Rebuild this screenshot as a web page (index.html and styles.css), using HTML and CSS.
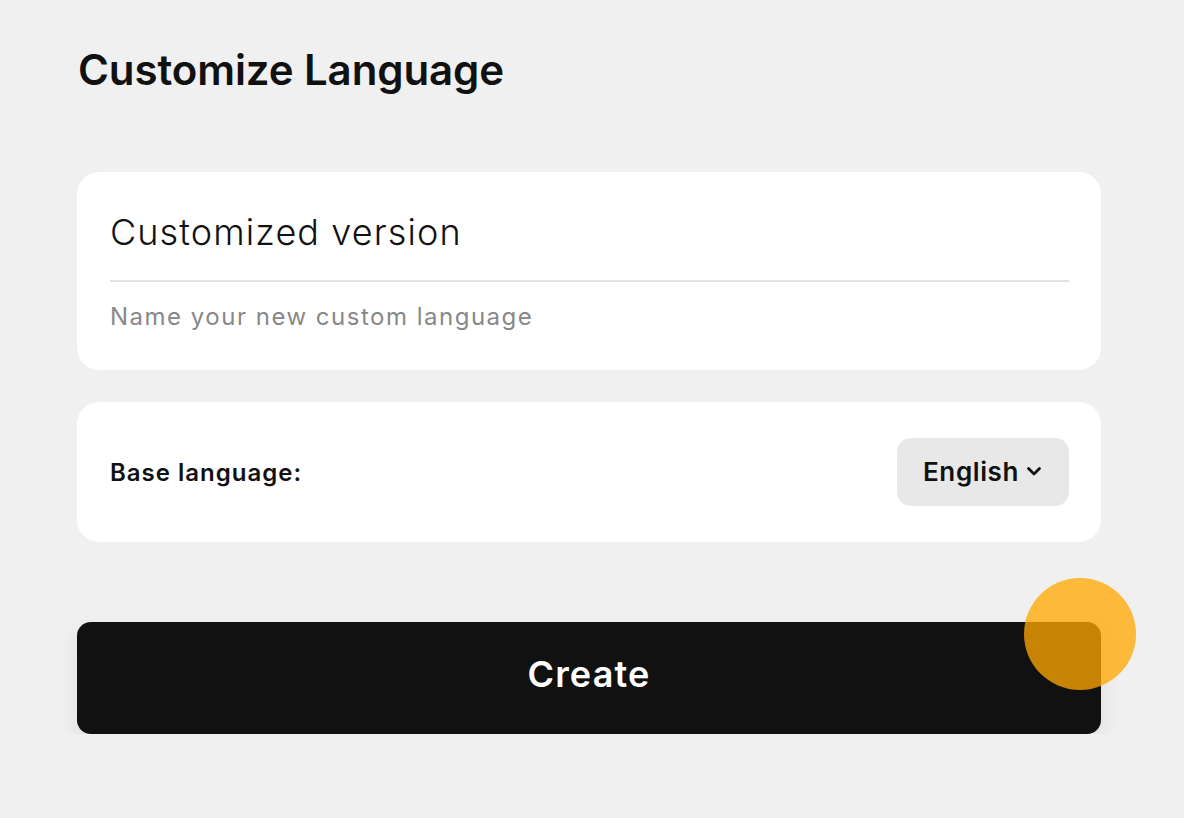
FILE: index.html
```html
<!DOCTYPE html>
<html lang="en">
<head>
    <meta charset="UTF-8">
    <meta name="viewport" content="width=device-width, initial-scale=1.0">
    <title>Customize Language</title>
    <link rel="stylesheet" href="styles.css">
</head>
<body>
    <div class="page">
        <h1 class="title">Customize Language</h1>

        <div class="card name-card">
            <div class="name-value">Customized version</div>
            <div class="divider"></div>
            <div class="name-hint">Name your new custom language</div>
        </div>

        <div class="card base-card">
            <span class="base-label">Base language:</span>
            <button class="select">
                English
                <svg width="18" height="18" viewBox="0 0 18 18" fill="none">
                    <path d="M3.5 6.5l5.5 5.5 5.5-5.5" stroke="#111" stroke-width="2.8" stroke-linecap="round" stroke-linejoin="round"/>
                </svg>
            </button>
        </div>

        <div class="create-wrap">
            <button class="create">Create</button>
            <div class="touch"></div>
        </div>
    </div>
</body>
</html>
```

FILE: styles.css
```css
body {
    margin: 0;
    background-color: #f0f0f0;
    font-family: Inter, "Noto Sans", sans-serif;
    color: #111;
}
.page {
    width: 1024px;
    padding: 44px 0 0 77px;
    display: flex;
    flex-direction: column;
}
.title {
    margin: 0 0 0 1px;
    font-size: 42px;
    font-weight: 600;
    line-height: 52px;
    letter-spacing: -0.1px;
}
.card {
    background: white;
    border-radius: 22px;
}
.name-card {
    margin-top: 76px;
    height: 198px;
    box-sizing: border-box;
    padding: 36px 32px 0 33px;
}
.name-value {
    font-size: 36px;
    font-weight: 300;
    line-height: 48px;
    letter-spacing: 1.1px;
}
.divider {
    height: 2px;
    background: #e2e2e2;
    margin-top: 24px;
}
.name-hint {
    margin-top: 16px;
    font-size: 24px;
    line-height: 38px;
    letter-spacing: 1.5px;
    color: #888;
}
.base-card {
    margin-top: 32px;
    height: 140px;
    box-sizing: border-box;
    padding: 0 32px 0 33px;
    display: flex;
    align-items: center;
    justify-content: space-between;
}
.base-label {
    font-size: 24px;
    font-weight: 600;
    letter-spacing: 1px;
}
.select {
    height: 68px;
    width: 172px;
    border: none;
    border-radius: 14px;
    background: #e8e8e8;
    font-family: inherit;
    font-size: 26px;
    font-weight: 600;
    letter-spacing: 0.6px;
    color: #111;
    display: flex;
    align-items: center;
    justify-content: center;
    gap: 6px;
    padding: 0 0 2px;
}
.create-wrap {
    position: relative;
    margin-top: 80px;
}
.create {
    width: 100%;
    height: 112px;
    border: none;
    border-radius: 14px;
    background: #111;
    color: white;
    font-family: inherit;
    font-size: 36px;
    font-weight: 600;
    letter-spacing: 1.2px;
    padding: 0 0 8px;
    box-shadow: 0 8px 20px rgba(0, 0, 0, 0.08);
}
.touch {
    position: absolute;
    left: 947px;
    top: -44px;
    width: 112px;
    height: 112px;
    border-radius: 50%;
    background: rgba(255, 167, 0, 0.76);
    filter: blur(0.6px);
}
```
